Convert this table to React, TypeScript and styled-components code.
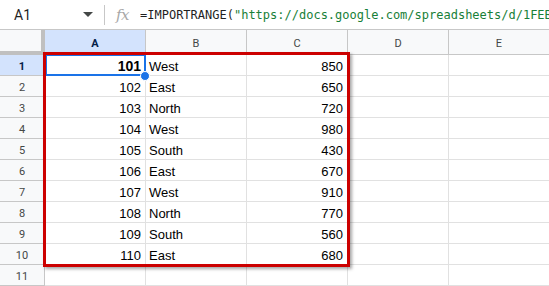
import React from "react";
import styled, { createGlobalStyle } from "styled-components";

const Global = createGlobalStyle`
  html, body { margin: 0; padding: 0; background: #fff; overflow: hidden; }
  * { box-sizing: border-box; }
`;

const Page = styled.div`
  width: 549px;
  height: 286px;
  overflow: hidden;
  display: flex;
  flex-direction: column;
  background: #fff;
`;

const FormulaBar = styled.div`
  height: 30px;
  flex: none;
  display: flex;
  align-items: center;
  border-bottom: 1px solid #c7c7c7;
  background: #fff;
  white-space: nowrap;
  overflow: hidden;
`;

const NameBox = styled.div`
  width: 104px;
  flex: none;
  display: flex;
  align-items: center;
  justify-content: space-between;
  padding: 0 11px 0 14px;
  font-family: Roboto, "Liberation Sans", sans-serif;
  font-size: 14px;
  color: #1f1f1f;
`;

const Caret = styled.svg`
  width: 10px;
  height: 6px;
  fill: #444746;
`;

const Divider = styled.div`
  width: 1px;
  height: 20px;
  background: #c7c7c7;
  flex: none;
`;

const Fx = styled.span`
  margin: 0 11px 0 11px;
  font-family: "DejaVu Serif", "Liberation Serif", serif;
  font-style: italic;
  font-size: 15px;
  color: #a8a8a8;
  letter-spacing: -0.5px;
`;

const Formula = styled.div`
  font-family: "DejaVu Sans Mono", "Liberation Mono", monospace;
  font-size: 12px;
  color: #1f1f1f;
  overflow: hidden;
`;

const Str = styled.span`
  color: #188038;
`;

const Sheet = styled.div`
  position: relative;
  flex: 1;
  overflow: hidden;
`;

const Row = styled.div<{ $h: number }>`
  display: grid;
  grid-template-columns: 45px repeat(5, 101px);
  height: ${(p) => p.$h}px;
`;

const Corner = styled.div`
  background: #f8f9fa;
  border-right: 4px solid #c0c0c0;
  border-bottom: 4px solid #c0c0c0;
`;

const ColHead = styled.div<{ $active?: boolean }>`
  display: flex;
  align-items: center;
  justify-content: center;
  background: ${(p) => (p.$active ? "#d3e3fd" : "#f8f9fa")};
  border-right: 1px solid #c7c7c7;
  border-bottom: 1px solid #c7c7c7;
  font-family: Roboto, "Liberation Sans", sans-serif;
  font-size: 11px;
  font-weight: ${(p) => (p.$active ? 700 : 400)};
  color: ${(p) => (p.$active ? "#041e49" : "#444746")};
  padding-top: 2px;
`;

const RowHead = styled.div<{ $active?: boolean }>`
  display: flex;
  align-items: center;
  justify-content: center;
  padding-top: 2px;
  background: ${(p) => (p.$active ? "#d3e3fd" : "#f8f9fa")};
  border-right: 1px solid #c7c7c7;
  border-bottom: 1px solid #c7c7c7;
  font-family: Roboto, "Liberation Sans", sans-serif;
  font-size: 11px;
  font-weight: ${(p) => (p.$active ? 700 : 400)};
  color: ${(p) => (p.$active ? "#041e49" : "#444746")};
`;

const Cell = styled.div<{ $num?: boolean; $bold?: boolean }>`
  display: flex;
  align-items: flex-end;
  justify-content: ${(p) => (p.$num ? "flex-end" : "flex-start")};
  padding: 0 4px 1px 3px;
  border-right: 1px solid #e1e1e1;
  border-bottom: 1px solid #e1e1e1;
  font-family: "Liberation Sans", Arial, sans-serif;
  font-size: ${(p) => (p.$bold ? "14px" : "13px")};
  font-weight: ${(p) => (p.$bold ? 700 : 400)};
  color: #000;
  white-space: nowrap;
  overflow: hidden;
`;

const Selection = styled.div`
  position: absolute;
  left: 45px;
  top: 24px;
  width: 101px;
  height: 22px;
  border: 2px solid #1a73e8;
  pointer-events: none;
`;

const Handle = styled.div`
  position: absolute;
  left: 140px;
  top: 41px;
  width: 10px;
  height: 10px;
  border-radius: 50%;
  background: #1a73e8;
  border: 1px solid #fff;
`;

const RangeBox = styled.div`
  position: absolute;
  left: 43px;
  top: 22px;
  width: 307px;
  height: 215px;
  border: 3px solid #cc0000;
  box-shadow: 2px 2px 3px rgba(0, 0, 0, 0.35);
  pointer-events: none;
`;

const data: [number, string, number][] = [
  [101, "West", 850],
  [102, "East", 650],
  [103, "North", 720],
  [104, "West", 980],
  [105, "South", 430],
  [106, "East", 670],
  [107, "West", 910],
  [108, "North", 770],
  [109, "South", 560],
  [110, "East", 680],
];

const cols = ["A", "B", "C", "D", "E"];

export default function App() {
  return (
    <Page>
      <Global />
      <FormulaBar>
        <NameBox>
          <span>A1</span>
          <Caret viewBox="0 0 10 6">
            <polygon points="0,0 10,0 5,5" />
          </Caret>
        </NameBox>
        <Divider />
        <Fx>fx</Fx>
        <Formula>
          =IMPORTRANGE(
          <Str>"https://docs.google.com/spreadsheets/d/1FEBxQ7kLmN2pR4sT","Sheet1!A1:C10"</Str>)
        </Formula>
      </FormulaBar>
      <Sheet>
        <Row $h={25}>
          <Corner />
          {cols.map((c) => (
            <ColHead key={c} $active={c === "A"}>
              {c}
            </ColHead>
          ))}
        </Row>
        {data.map(([id, region, val], i) => (
          <Row $h={21} key={id}>
            <RowHead $active={i === 0}>{i + 1}</RowHead>
            <Cell $num $bold={i === 0}>
              {id}
            </Cell>
            <Cell>{region}</Cell>
            <Cell $num>{val}</Cell>
            <Cell />
            <Cell />
          </Row>
        ))}
        <Row $h={21}>
          <RowHead>11</RowHead>
          <Cell />
          <Cell />
          <Cell />
          <Cell />
          <Cell />
        </Row>
        <Selection />
        <Handle />
        <RangeBox />
      </Sheet>
    </Page>
  );
}
